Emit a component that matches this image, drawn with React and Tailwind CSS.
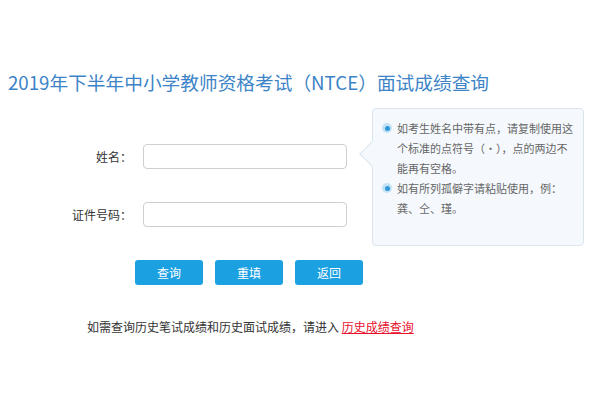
import React from 'react';

const font = { fontFamily: '"Noto Sans CJK SC", "Noto Sans", sans-serif' };

const Bullet = () => (
  <span className="mt-[5px] flex h-[10px] w-[10px] shrink-0 items-center justify-center rounded-full bg-[#c4e2f5]">
    <span className="h-[5px] w-[5px] rounded-full bg-[#2f97d8]" />
  </span>
);

const Field = ({ label }) => (
  <div className="flex items-center">
    <label className="w-[72px] text-right text-[12px] text-[#333]">{label}</label>
    <input className="ml-[11px] h-[25px] w-[204px] rounded-[4px] border border-[#cfcfcf] bg-white outline-none" />
  </div>
);

export default function App() {
  return (
    <div className="h-[400px] w-[600px] overflow-hidden bg-white" style={font}>
      {/* title */}
      <h1 className="pl-[8px] pt-[70px] text-[18.7px] leading-[24px] font-normal text-[#3c84c7] whitespace-nowrap">
        2019年下半年中小学教师资格考试（NTCE）面试成绩查询
      </h1>

      {/* form + tips */}
      <div className="mt-[14px] flex items-start">
        <div className="ml-[60px] flex flex-col gap-[33px] pt-[36px]">
          <Field label="姓名：" />
          <Field label="证件号码：" />
        </div>

        <div className="relative ml-[25px] h-[138px] w-[212px] rounded-[4px] border border-[#dbe5ee] bg-[#f5f9fd] pl-[9px] pt-[9px] text-[11px] leading-[20px] text-[#666] whitespace-nowrap">
          <span className="absolute left-[-10px] top-[36px] h-[18px] w-[18px] rotate-45 border-b border-l border-[#dbe5ee] bg-[#f5f9fd]" />
          <div className="relative flex gap-[5px]">
            <Bullet />
            <p>
              如考生姓名中带有点，请复制使用这<br />
              个标准的点符号（·），点的两边不<br />
              能再有空格。
            </p>
          </div>
          <div className="relative flex gap-[5px]">
            <Bullet />
            <p>
              如有所列孤僻字请粘贴使用，例：<br />
              龚、仝、瑾。
            </p>
          </div>
        </div>
      </div>

      {/* buttons */}
      <div className="ml-[135px] mt-[14px] flex gap-[12px]">
        {['查询', '重填', '返回'].map((t) => (
          <button
            key={t}
            className="h-[25px] w-[68px] rounded-[3px] bg-[#1ba0e1] text-[12px] text-white"
          >
            {t}
          </button>
        ))}
      </div>

      <p className="ml-[87px] mt-[33px] text-[12px] leading-[18px] text-[#333]">
        如需查询历史笔试成绩和历史面试成绩，请进入{' '}
        <a href="#" className="text-[#e8112d] underline">历史成绩查询</a>
      </p>
    </div>
  );
}
